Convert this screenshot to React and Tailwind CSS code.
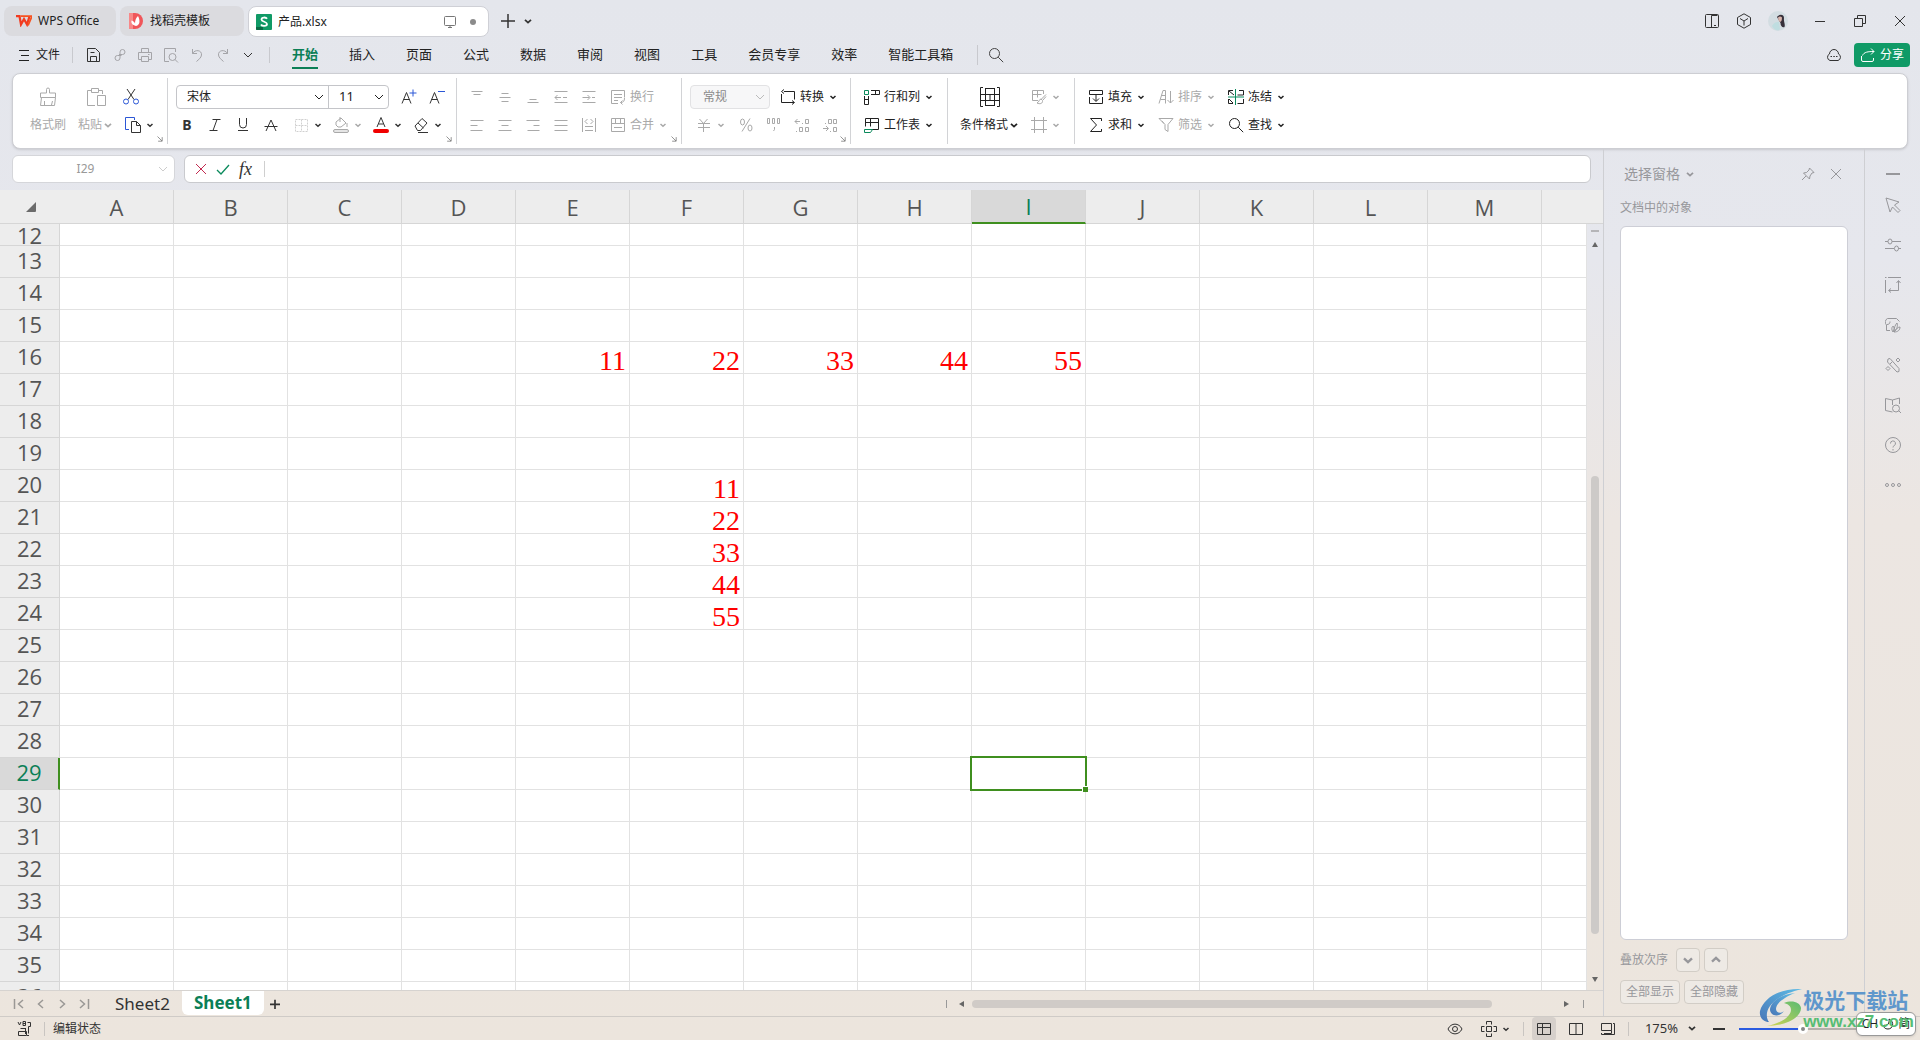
import React, { useState } from 'react'

const columns = ['A', 'B', 'C', 'D', 'E', 'F', 'G', 'H', 'I', 'J', 'K', 'L', 'M', '']
const rows = Array.from({ length: 25 }, (_, i) => i + 12)
const cells = {
  E16: '11', F16: '22', G16: '33', H16: '44', I16: '55',
  F20: '11', F21: '22', F22: '33', F23: '44', F24: '55',
}
const menus = ['开始', '插入', '页面', '公式', '数据', '审阅', '视图', '工具', '会员专享', '效率', '智能工具箱']

const icons = {
  menu: 'M3 3.5h10M5 8.5h8M3 13.5h10',
  save: 'M2.5 1.5h8l4 4v9h-12zM5.5 14v-4.500h6V14M5.5 5.500h4',
  link: 'M8 7.500h3.500a2.500 2.500 0 1 0-2.500-2.500v6a2.500 2.500 0 1 1-2.500-2.500h4',
  print: 'M4.500 5V1.500h7V5M4.500 12.500h-3v-7h13v7h-3M4.500 9.500h7v5h-7zM11 7.500h1.500',
  preview: 'M6 14.500H1.500v-13h11V5M9.500 6.500a3.500 3.500 0 1 0 0 7a3.500 3.500 0 1 0 0-7M12 12.500l3 3',
  undo: 'M3.500 2v4.500H8M3.500 6.500C6 2 13 3 12.500 8c-.3 3-3 4.500-5 6.500',
  redo: 'M12.500 2v4.500H8M12.500 6.500C10 2 3 3 3.500 8c.3 3 3 4.500 5 6.500',
  search: 'M6.500 1.500a5 5 0 1 0 0 10a5 5 0 1 0 0-10M10.200 10.200l5 5',
  alignTop: 'M2.500 2.500h11M4.500 5.500h7',
  alignMid: 'M4.500 4.500h7M2.500 8.500h11M4.500 12.500h7',
  alignBot: 'M4.500 10.500h7M2.500 13.500h11',
  outdent: 'M1.500 2.500h13M1.500 13.500h13M2 8.500h6M10 8.500h4M4.500 6L2 8.500L4.500 11',
  indent: 'M1.500 2.500h13M1.500 13.500h13M1.500 8.500h7M11 8.500h3M6.500 6L9 8.500L6.500 11',
  left: 'M1.500 3.500h13M1.500 8.500h7M1.500 13.500h12',
  center: 'M1.500 3.500h13M4.500 8.500h7M1.500 13.500h13',
  right: 'M1.500 3.500h13M8.500 8.500h6M2.500 13.500h12',
  justify: 'M1.500 3.500h13M1.500 8.500h13M1.500 13.500h13',
  distribute: 'M1.500 1v14M14.500 1v14M4 9.500h8M4 13.500h8M6.500 2L4 4.500L6.500 7M9.500 2L12 4.500L9.500 7',
  wrap: 'M8 14.500H1.500v-13h13v7M4 5.500h8M4 8.500h8M4 11.500h4M14.500 9c0 3-1 4.500-4 4.500M12.500 11.500l-2 2l2 2',
  merge: 'M1.500 1.500h13v13h-13zM1.500 6.500h13M5.500 1.500v5M10.500 1.500v5M4 10.500h8',
  convert: 'M4 2.500h10.500v8M1.500 5v8.500H14M4 .500l-2.500 2L4 4.500M12 11.500l2.500 2l-2.500 2',
  sheet: 'M8 12.500h6.500v-11h-13v8M1.500 5.500h13M6.500 1.500v8',
  fill: 'M1.500 5.500v-4h13v4zM1.500 8v6.500h13V8M8 5.500v6.500M5 9.500l3 3l3-3',
  sum: 'M13.500 4V1.500h-11l6 6.500l-6 6.500h11V12',
  sort: 'M1 14.500l4-13h2.500v13M3.500 6.500h4M2.500 10.500h5M12.500 2v12M9.500 11l3 3l3-3',
  filter: 'M1 1.500h14l-5 6v7l-3-2v-5zM4 4l2 2.500',
  cellStyle: 'M7 11.500H1.500v-10h11V5M1.500 5.500h9M6.500 1.500v7M15 5.500l-5 5M10 10c-2 0-1.500 3-4 4c3 1.500 6 .5 5.500-2.500zM12 11l3-3.500',
  frame: 'M3.500 0v16M12.500 0v16M0 3.500h16M0 12.500h16',
  eraser: 'M2 9l7-7.500L14 6l-6.500 7.500h-3zM5 6l5.500 5M5 15.500h10',
  split: 'M1.500 2.500h13v11h-13zM8 2.500v11',
  gridView: 'M1.500 2.500h13v11h-13zM6.500 2.500v11M1.500 6.500h13',
  pageView: 'M1.500 2.500h10v7h-10zM13 2.500h1.500v11h-13V12M4 12.500h7.500V9.500',
  eye: 'M1 8C4 1.500 12 1.500 15 8C12 14.500 4 14.500 1 8M8 5.500a2.500 2.500 0 1 0 0 5a2.500 2.500 0 1 0 0-5',
  focus: 'M5.500 5.500h5v5h-5zM5.500 3.500v-3h5v3M5.500 12.500v3h5v-3M3.500 5.500h-3v5h3M12.500 5.500h3v5h-3',
  vba: 'M2 1l1.500 3L5 1M7 .5v4h2.500v-4zM7 2.500h2M11.500 1.500h3v4h-2v7M4.500 7.500h5v3M9.500 7v6M2.500 10.500h8v4h-8zM11 14.500h2',
  phone: 'M1.500 2.500a1 1 0 0 1 1-1h11a1 1 0 0 1 1 1v11a1 1 0 0 1-1 1h-11a1 1 0 0 1-1-1zM7.500 14.500v-12h6M10 12.500h2',
  cube: 'M8 .8l6.500 3.700v7L8 15.200l-6.500-3.700v-7zM4 5.500l4 2.500l4-2.500M8 8v4.500',
  restore: 'M5.500 5.500v-3h8v8h-3M2.500 5.500h8v8h-8z',
  close: 'M3 3l10 10M13 3L3 13',
  minus: 'M3 8.500h10',
  cloud: 'M4 13.500a3.500 3.500 0 0 1-.5-6.500a4.500 4.500 0 0 1 9 0a3.500 3.500 0 0 1-.5 6.500zM4.500 9.500h1.500M7.300 9.500h1.500M10 9.500h1.500',
  share: 'M1.500 9v4a1.500 1.500 0 0 0 1.500 1.500h9a1.500 1.500 0 0 0 1.500-1.500v-2M2.500 8.500C4 5 8 4.500 14 4.500M11 1.500l3 3l-3 3',
  pin: 'M9.500 2l4.500 4.500l-2 .5l-2 3l-.5 3L3.500 7l3-.5l2.500-2.500zM6 10l-4 4',
  cursor: 'M1 1l13 4l-4.500 3l5.500 5.500l-2 2L7.500 10l-2.500 5z',
  sliders: 'M0 4.500h3M7 4.500h9M0 11.500h9M13 11.500h3M5 2a2 2.500 0 1 0 0 5a2 2.500 0 1 0 0-5M11.500 9a2 2.500 0 1 0 0 5a2 2.500 0 1 0 0-5',
  transform: 'M.5 3v13M3 .5h13M0 .5h1.500M13.500 4v9.500H4M11.500 6l2-2.500l2 2.500M6 11.500l-2.500 2l2.500 2',
  leaf: 'M5 13.500H1.500V8a4 4 0 0 1 1-6.500h9l3 3M2 7.500c2 0 3-1 3-3M8 15c-2-3-1-5 0-6c1 1 2 3 0 6zM9 15c0-4 1-7 3-9c1 3 0 6-3 9zM9 15c2-3 4-5 6-5c0 3-2 5-6 5z',
  tools: 'M3 2l2-.5l9 10v3l-2 .5L2.500 5zM5 7l2-2M13 1l2 2l-2 2l-2-2zM3 9.500l2 2l-2 2l-2-2z',
  book: 'M7.500 15l-7-1.500V1.500L7.500 3l7-2v6M7.500 3v5M11 8a3 3 0 1 0 0 7a3 3 0 1 0 0-7M13.500 13.500l2.500 2.500',
  help: 'M8 .5a7.500 7.500 0 1 0 0 15a7.500 7.500 0 1 0 0-15M5.500 6.500a2.500 2.500 0 1 1 3.500 2.200q-1 .5-1 1.800M8 12v1.500',
  more: 'M2 6.500a1.500 1.500 0 1 0 0 3a1.500 1.500 0 1 0 0-3M8 6.500a1.500 1.500 0 1 0 0 3a1.500 1.500 0 1 0 0-3M14 6.500a1.500 1.500 0 1 0 0 3a1.500 1.500 0 1 0 0-3',
  monitor: 'M2.500 3.500a1 1 0 0 1 1-1h9a1 1 0 0 1 1 1v7a1 1 0 0 1-1 1h-9a1 1 0 0 1-1-1zM6 13.500h4M8 11.500v2',
  launcher: 'M4 4l7 7M11.500 5v6.500H5',
}

const Icon = ({ name, className = 'size-4' }) => (
  <svg viewBox="0 0 16 16" fill="none" stroke="currentColor" className={`shrink-0 ${className}`}>
    <path d={icons[name]} />
  </svg>
)

const Chevron = ({ className = 'w-2.5' }) => (
  <svg viewBox="0 0 10 10" fill="none" stroke="currentColor" strokeWidth="1.5" className={`shrink-0 ${className}`}>
    <path d="M2.500 4L5 6.300L7.500 4" />
  </svg>
)

const ThinChevron = ({ className = 'w-2.5' }) => (
  <svg viewBox="0 0 10 10" fill="none" stroke="currentColor" className={`shrink-0 ${className}`}>
    <path d="M1 3l4 4l4-4" />
  </svg>
)

const Tool = ({ label, muted, children }) => (
  <button aria-label={label} className={`flex h-7 w-7 items-center justify-center ${muted ? 'text-[#a9a9a9]' : 'text-[#333]'}`}>
    {children}
  </button>
)

const DropTool = ({ label, muted, children }) => (
  <button aria-label={label} className={`flex h-7 w-10 items-center gap-1 pl-2 ${muted ? 'text-[#a9a9a9]' : 'text-[#333]'}`}>
    {children}
    <Chevron />
  </button>
)

const TextTool = ({ text, muted, arrow = true, children }) => (
  <button className={`flex h-7 items-center gap-1 whitespace-nowrap ${muted ? 'text-[#a9a9a9]' : 'text-[#222]'}`}>
    {children}
    {text}
    {arrow && <Chevron />}
  </button>
)

const Group = ({ width, launcher, children }) => (
  <div className={`relative flex h-[66px] shrink-0 border-r border-[#d2d3d6] pt-[5px] ${width}`}>
    {children}
    {launcher && (
      <button aria-label="更多设置" className="absolute right-0.5 bottom-0 text-[#555]">
        <Icon name="launcher" className="size-2.5" />
      </button>
    )}
  </div>
)

const TitleBar = () => (
  <header className="flex items-start pt-1.5 pl-1 text-xs text-[#222]">
    <nav className="flex gap-1">
      <a href="#home" className="flex h-[30px] w-28 items-center gap-1.5 rounded-lg bg-[#dbdbdf] pl-3">
        <svg viewBox="0 0 16 12" className="w-4" fill="none" stroke="#f23b20" strokeWidth="2.200">
          <path d="M0 1.200h3.500L5 9.500L8 4L11 9.500L13.500 1.200" />
          <path d="M4.500 1.200H16L12 10.500" stroke="#f7521f" strokeWidth="1.800" />
        </svg>
        WPS Office
      </a>
      <a href="#docer" className="flex h-[30px] w-31 items-center gap-1.5 rounded-lg bg-[#dbdbdf] pl-2">
        <svg viewBox="0 0 16 16" className="size-4">
          <path d="M1 0h6a8 8 0 0 1 0 16H1z" fill="#f0565a" />
          <path d="M1 0h4v16H1z" fill="#f88888" />
          <path d="M8 13c-4-1-5-3-4.500-5.500c2 .5 3 1.500 3.500 3c0-3 1-6 3-7.500c2 4 2.500 9-2 10z" fill="#fff" />
        </svg>
        找稻壳模板
      </a>
      <a href="#file" className="flex h-[31px] w-[241px] items-center gap-1.5 rounded-lg border border-[#cfd0d6] bg-white pr-2.5 pl-[7px]">
        <svg viewBox="0 0 16 16" className="size-4">
          <rect width="16" height="16" rx="1" fill="#109a66" />
          <path d="M0 13h7v3H1a1 1 0 0 1-1-1z" fill="#0a6b45" />
          <path d="M11 4.800C10 3 5.500 3 5.500 5.500S11 7.500 11 10S6 12.500 5 10.500" fill="none" stroke="#fff" strokeWidth="1.800" />
        </svg>
        <span className="grow">产品.xlsx</span>
        <Icon name="monitor" className="size-4 text-[#777]" />
        <span className="mr-0.5 ml-1.5 size-1.5 rounded-full bg-[#8b8b8b]" />
      </a>
    </nav>
    <button aria-label="新建" className="ml-3 flex h-[30px] items-center text-[#333]">
      <svg viewBox="0 0 14 14" className="size-3.5" stroke="currentColor" strokeWidth="1.500"><path d="M7 0v14M0 7h14" /></svg>
    </button>
    <button aria-label="标签列表" className="ml-[7px] flex h-[30px] items-center text-[#333]"><Chevron className="w-3" /></button>
    <div className="ml-auto flex h-[29px] items-center pr-3 text-[#333]">
      <button aria-label="手机视图" className="mr-4"><Icon name="phone" /></button>
      <button aria-label="应用" className="mr-4"><Icon name="cube" /></button>
      <button aria-label="账号" className="mr-6">
        <svg viewBox="0 0 20 20" className="size-5">
          <circle cx="10" cy="10" r="10" fill="#d3dde2" />
          <path d="M4 15c2-4 5-4 7-4l1 7.500c-3 1.500-6 .5-8-3.500z" fill="#bfdde0" />
          <path d="M9 6c2-3 7-3 7 1c-.5 4 1.500 6 .5 9c-2 1-4-1-4-4z" fill="#37303a" />
          <path d="M10 6.500q2-2 4 0q0 4-2 4.500q-2-1-2-4.500" fill="#d9b5ac" />
        </svg>
      </button>
      <button aria-label="最小化" className="mr-6"><Icon name="minus" /></button>
      <button aria-label="还原" className="mr-6"><Icon name="restore" /></button>
      <button aria-label="关闭"><Icon name="close" /></button>
    </div>
  </header>
)

const MenuBar = () => (
  <div className="flex h-[37px] items-center pr-2.5 pl-4 text-[13px] text-[#222]">
    <button className="flex items-center gap-1 text-xs"><Icon name="menu" />文件</button>
    <span className="ml-3 h-4 w-px bg-[#c8c9ce]" />
    <div className="ml-3 flex items-center gap-2.5 text-[#a4a4a8]">
      <button aria-label="保存" className="text-[#333]"><Icon name="save" /></button>
      <button aria-label="输出"><Icon name="link" /></button>
      <button aria-label="打印"><Icon name="print" /></button>
      <button aria-label="预览"><Icon name="preview" /></button>
      <button aria-label="撤销"><Icon name="undo" /></button>
      <button aria-label="恢复"><Icon name="redo" /></button>
      <button aria-label="更多" className="ml-0.5 text-[#333]"><ThinChevron /></button>
    </div>
    <span className="ml-4 h-4 w-px bg-[#c8c9ce]" />
    <nav className="ml-[22px] flex gap-[31px] pt-1">
      {menus.map((m, i) => (
        <a
          key={m}
          href={`#${m}`}
          className={i === 0 ? 'border-b-2 border-[#0b7f56] pb-0.5 font-bold text-[#0b7f56]' : 'border-b-2 border-transparent pb-0.5'}
        >
          {m}
        </a>
      ))}
    </nav>
    <span className="ml-6 h-5 w-px bg-[#c8c9ce]" />
    <button aria-label="查找命令" className="ml-2.5 text-[#444]"><Icon name="search" /></button>
    <button aria-label="云文档" className="mr-3 ml-auto text-[#333]"><Icon name="cloud" /></button>
    <button className="flex h-6 w-14 items-center justify-center gap-1 rounded bg-[#109a66] text-xs text-white">
      <Icon name="share" />分享
    </button>
  </div>
)

const Ribbon = () => (
  <section className="mx-3 flex rounded-lg border border-[#cdced3] bg-white py-1 text-xs shadow">
    <Group width="w-[155px] pl-[17px]" launcher>
      <button className="flex w-9 flex-col items-center text-[#a9a9a9]">
        <span className="flex h-7 items-center">
          <svg viewBox="0 0 20 20" className="size-5" fill="none" stroke="currentColor">
            <path d="M8.500 6V2.500a1.500 1.500 0 0 1 3 0V6h6v4.500h-15V6zM3.500 10.500l-1 8h14l1-8M6.500 18v-4M13.500 18l1-4" />
          </svg>
        </span>
        <span className="flex h-7 items-center whitespace-nowrap">格式刷</span>
      </button>
      <button className="ml-3 flex w-9 flex-col items-center text-[#a9a9a9]">
        <span className="flex h-7 items-center">
          <svg viewBox="0 0 20 20" className="size-5" fill="none" stroke="currentColor">
            <path d="M9 18.500H1.500v-15H5M13 3.500h3.500V7M5.500 1.500h7v4h-7zM11.500 8.500h8v10h-8z" />
          </svg>
        </span>
        <span className="flex h-7 items-center whitespace-nowrap">粘贴<Chevron className="w-3" /></span>
      </button>
      <div className="ml-[3px] flex flex-col">
        <Tool label="剪切">
          <svg viewBox="0 0 16 16" className="size-4" fill="none" stroke="currentColor">
            <path d="M4 0l7 10.500M12 0L5 10.500" />
            <circle cx="3" cy="12.500" r="2.500" stroke="#2b57d6" />
            <circle cx="13" cy="12.500" r="2.500" stroke="#2b57d6" />
          </svg>
        </Tool>
        <DropTool label="复制">
          <svg viewBox="0 0 16 16" className="size-4" fill="none" stroke="currentColor">
            <path d="M4 12.500H.5v-12h9V3" stroke="#2b57d6" />
            <path d="M6.500 4.500h5l4 4v7h-9zM11.500 4.500v4h4" />
          </svg>
        </DropTool>
      </div>
    </Group>

    <Group width="w-[289px] flex-col" launcher>
      <div className="flex h-7 items-center pl-2">
        <div className="flex h-6 items-center rounded border border-[#c4c5c9] text-[#222]">
          <label className="flex w-[151px] items-center pr-1">
            <select aria-label="字体" className="grow appearance-none pl-2.5"><option>宋体</option></select>
            <ThinChevron />
          </label>
          <label className="flex h-full w-[60px] items-center border-l border-[#c4c5c9] pr-1">
            <select aria-label="字号" className="w-10 grow appearance-none pl-2.5 text-[13px]"><option>11</option></select>
            <ThinChevron />
          </label>
        </div>
        <div className="ml-1.5 flex">
          <Tool label="增大字号">
            <svg viewBox="0 0 16 16" className="size-4" fill="none" stroke="currentColor">
              <path d="M1 14.500L5.500 3.500L10 14.500M2.500 10.500h6" /><path d="M12 .5v7M8.500 4h7" stroke="#2b57d6" />
            </svg>
          </Tool>
          <Tool label="减小字号">
            <svg viewBox="0 0 16 16" className="size-4" fill="none" stroke="currentColor">
              <path d="M1 14.500L5.500 3.500L10 14.500M2.500 10.500h6" /><path d="M9 2.500h7" stroke="#2b57d6" />
            </svg>
          </Tool>
        </div>
      </div>
      <div className="flex h-7 items-center pl-[5px]">
        <Tool label="加粗"><b className="text-sm">B</b></Tool>
        <Tool label="倾斜">
          <svg viewBox="0 0 16 16" className="size-4" fill="none" stroke="currentColor"><path d="M5.500 2.500h8M2.500 13.500h8M10 2.500L6 13.500" /></svg>
        </Tool>
        <Tool label="下划线">
          <svg viewBox="0 0 16 16" className="size-4" fill="none" stroke="currentColor"><path d="M4.500 1v6.500a3.500 3.500 0 0 0 7 0V1M3 13.500h10" /></svg>
        </Tool>
        <Tool label="删除线">
          <svg viewBox="0 0 16 16" className="size-4" fill="none" stroke="currentColor"><path d="M3 14L8 3L13 14M1.500 9.500h13" /></svg>
        </Tool>
        <DropTool label="边框">
          <svg viewBox="0 0 16 16" className="size-4 text-[#d0d0d0]" fill="none" stroke="currentColor" strokeDasharray="2 1"><path d="M2.500 2.500h12v12h-12zM8.500 2.500v12M2.500 8.500h12" /></svg>
        </DropTool>
        <DropTool label="填充颜色" muted>
          <svg viewBox="0 0 16 16" className="size-4" fill="none" stroke="currentColor">
            <path d="M3 5l5-4l5 5l-5 4H5L3 8zM7 5V0M14 6v4" /><rect x=".5" y="12.500" width="15" height="3" rx="1.500" fill="#e5e5e5" />
          </svg>
        </DropTool>
        <DropTool label="字体颜色">
          <svg viewBox="0 0 16 16" className="size-4" fill="none" stroke="currentColor">
            <path d="M4 10L8 .5L12 10M5.500 7h5" /><rect x="0" y="12" width="16" height="4" rx="2" fill="#f00000" stroke="none" />
          </svg>
        </DropTool>
        <DropTool label="清除"><Icon name="eraser" /></DropTool>
      </div>
    </Group>

    <Group width="w-[225px] flex-col" launcher>
      <div className="flex h-7 pl-1.5">
        {['alignTop', 'alignMid', 'alignBot', 'outdent', 'indent'].map((n) => (
          <Tool key={n} label={n} muted><Icon name={n} /></Tool>
        ))}
        <span className="w-[7px]" />
        <TextTool text="换行" muted arrow={false}><Icon name="wrap" /></TextTool>
      </div>
      <div className="flex h-7 pl-1.5">
        {['left', 'center', 'right', 'justify', 'distribute'].map((n) => (
          <Tool key={n} label={n} muted><Icon name={n} /></Tool>
        ))}
        <span className="w-[7px]" />
        <TextTool text="合并" muted><Icon name="merge" /></TextTool>
      </div>
    </Group>

    <Group width="w-[169px] flex-col" launcher>
      <div className="flex h-7 items-center pl-2">
        <label className="mr-2.5 flex h-6 w-20 items-center rounded border border-[#e2e2e4] bg-[#f7f7f8] pr-1 text-[#8a8a8a]">
          <select aria-label="数字格式" className="w-10 grow appearance-none pl-3"><option>常规</option></select>
          <ThinChevron className="w-2.5 text-[#bbb]" />
        </label>
        <TextTool text="转换"><Icon name="convert" /></TextTool>
      </div>
      <div className="flex h-7 pl-1.5">
        <DropTool label="货币" muted>
          <svg viewBox="0 0 16 16" className="size-4" fill="none" stroke="currentColor"><path d="M3.500 2l4 4.500l4-4.500M2 6.500h12M2 10.500h12M7.500 6.500V15" /></svg>
        </DropTool>
        <span className="w-1" />
        <Tool label="百分比" muted>
          <svg viewBox="0 0 16 16" className="size-4" fill="none" stroke="currentColor"><path d="M12 1.500l-8 13" /><ellipse cx="4.500" cy="5" rx="2" ry="3" /><ellipse cx="12" cy="11" rx="2" ry="3" /></svg>
        </Tool>
        <Tool label="千位分隔" muted>
          <svg viewBox="0 0 16 16" className="size-4" fill="none" stroke="currentColor"><path d="M1.500 1.500h2v5h-2zM6.500 1.500h2v5h-2zM11.500 1.500h2v5h-2zM8.500 10v2.500l-1 1.500" /></svg>
        </Tool>
        <Tool label="增加小数位" muted>
          <svg viewBox="0 0 16 16" className="size-4" fill="none" stroke="currentColor"><path d="M3.500 2L1 4.500L3.500 7M1 4.500h5M8 6.500h1M11.500 2.500h3v4h-3zM2 14.500h1M5.500 10.500h3v4h-3zM11.500 10.500h3v4h-3z" /></svg>
        </Tool>
        <Tool label="减少小数位" muted>
          <svg viewBox="0 0 16 16" className="size-4" fill="none" stroke="currentColor"><path d="M4 9L6.500 11.500L4 14M1 11.500h5M8 14.500h1M11.500 10.500h3v4h-3zM3 6.500h1M6.500 2.500h3v4h-3zM11.500 2.500h3v4h-3z" /></svg>
        </Tool>
      </div>
    </Group>

    <Group width="w-[97px] flex-col pl-[13px]">
      <TextTool text="行和列">
        <svg viewBox="0 0 16 16" className="size-4" fill="none" stroke="currentColor">
          <path d="M7 1.500h8.500v4H7M11.500 1.500v4M.5 7v8.500h4V7M.5 10.500h4" /><path d="M.5 1.500h4v4h-4z" stroke="#0b8a5c" />
        </svg>
      </TextTool>
      <TextTool text="工作表">
        <svg viewBox="0 0 16 16" className="size-4" fill="none" stroke="currentColor">
          <path d={icons.sheet} /><path d="M.5 12.500h8l-2 3h-6z" stroke="#0b8a5c" />
        </svg>
      </TextTool>
    </Group>

    <Group width="w-[127px] pl-3">
      <button className="flex flex-col items-center text-[#222]">
        <span className="flex h-7 items-center">
          <svg viewBox="0 0 20 20" className="size-5" fill="none" stroke="currentColor">
            <path d="M3 .5H.5v19H3M17 .5h2.500v19H17M5.500 1.500v17M14.500 1.500v17M.5 7.500h19M.5 13.500h19M5 1.500h10M5 18.500h10M10 7.500v6" />
          </svg>
        </span>
        <span className="flex h-7 items-center whitespace-nowrap">条件格式<Chevron className="w-3" /></span>
      </button>
      <div className="ml-[3px] flex flex-col">
        <DropTool label="单元格样式" muted><Icon name="cellStyle" /></DropTool>
        <DropTool label="表格样式" muted><Icon name="frame" /></DropTool>
      </div>
    </Group>

    <div className="grid grid-cols-[70px_70px_70px] content-start pt-[5px] pl-[13px]">
      <TextTool text="填充"><Icon name="fill" /></TextTool>
      <TextTool text="排序" muted><Icon name="sort" /></TextTool>
      <TextTool text="冻结">
        <svg viewBox="0 0 16 16" className="size-4" fill="none" stroke="currentColor">
          <path d="M5 1.500H.5V6M11 1.500h4.500V6h-6M.5 10v4.500H5M15.500 10v4.500h-6M1 2l5 4M1 10l4 4" /><path d="M0 8h16M7.500 0v16" stroke="#0b8a5c" />
        </svg>
      </TextTool>
      <TextTool text="求和"><Icon name="sum" /></TextTool>
      <TextTool text="筛选" muted><Icon name="filter" /></TextTool>
      <TextTool text="查找"><Icon name="search" /></TextTool>
    </div>
  </section>
)

const FormulaBar = () => {
  const [formula, setFormula] = useState('')
  return (
    <div className="flex gap-[9px] px-3 pt-1.5 pb-[7px] text-xs">
      <div className="flex h-7 w-[163px] items-center rounded-md border border-[#d5d6da] bg-white pr-1.5 text-[#999]">
        <input aria-label="名称框" defaultValue="I29" className="w-10 grow text-center outline-none" />
        <ThinChevron className="w-2.5 text-[#ccc]" />
      </div>
      <div className="flex h-7 grow items-center rounded-md border border-[#c9cace] bg-white pl-2">
        <button aria-label="取消" className="text-[#c22a4f]"><Icon name="close" /></button>
        <button aria-label="输入" className="ml-1.5 text-[#0b8a5c]">
          <svg viewBox="0 0 16 16" className="size-4" fill="none" stroke="currentColor" strokeWidth="1.300"><path d="M2 9l4 4l8-9" /></svg>
        </button>
        <button aria-label="插入函数" className="ml-2 font-['Liberation_Serif',serif] text-lg leading-none text-[#333] italic">fx</button>
        <span className="ml-3 h-4 w-px bg-[#cfcfcf]" />
        <input
          aria-label="编辑栏"
          value={formula}
          onChange={(e) => setFormula(e.target.value)}
          className="grow px-2 outline-none"
        />
      </div>
    </div>
  )
}

const Grid = () => (
  <div className="flex min-h-0 grow">
    <div className="min-w-0 grow overflow-hidden bg-white">
      <table className="w-[1656px] table-fixed border-separate border-spacing-0 font-['Open_Sans',sans-serif] text-[22px] leading-5 text-[#555]">
        <thead>
          <tr className="h-[34px] bg-[#ededed]">
            <th className="w-[60px] border-b border-[#d6d6d6]">
              <svg viewBox="0 0 10 10" className="ml-[26px] size-2.5" fill="#6b6b6b"><path d="M10 0v9a1 1 0 0 1-1 1H0z" /></svg>
            </th>
            {columns.map((c) => (
              <th
                key={c}
                className={
                  c === 'I'
                    ? 'w-[114px] border-r border-b-2 border-r-[#d6d6d6] border-b-[#3f8f1f] bg-[#d9d9d9] font-normal text-[#0b7f56]'
                    : 'w-[114px] border-r border-b border-[#d6d6d6] font-normal'
                }
              >
                {c}
              </th>
            ))}
          </tr>
        </thead>
        <tbody>
          {rows.map((r) => (
            <tr key={r} className={r === 12 ? 'h-[22px]' : 'h-8'}>
              <th
                className={
                  r === 29
                    ? 'border-r-2 border-b border-r-[#3f8f1f] border-b-[#d6d6d6] bg-[#d9d9d9] p-0 pb-1 font-normal text-[#0b7f56]'
                    : r === 12
                      ? 'border-r border-b border-[#d6d6d6] bg-[#ededed] p-0 leading-4 font-normal'
                      : 'border-r border-b border-[#d6d6d6] bg-[#ededed] p-0 pb-1 font-normal'
                }
              >
                {r}
              </th>
              {columns.map((c) => (
                <td
                  key={c}
                  className={
                    r === 12
                      ? 'border-r border-b border-[#e2e2e2] p-0'
                      : "relative border-r border-b border-[#e2e2e2] p-0 pt-1.5 pr-[3px] text-right font-['Liberation_Serif',serif] text-[28px] text-[#f00]"
                  }
                >
                  {cells[c + r]}
                  {c === 'I' && r === 29 && (
                    <span className="absolute -inset-0.5 z-10 border-2 border-[#3f8f1f]">
                      <span className="absolute -right-[3px] -bottom-[3px] size-1.5 border-t border-l border-white bg-[#3f8f1f]" />
                    </span>
                  )}
                </td>
              ))}
            </tr>
          ))}
        </tbody>
      </table>
    </div>
    <div className="flex w-[17px] shrink-0 flex-col items-center border-l border-[#e2e2e2] text-[#666]">
      <span className="-ml-px h-[34px] w-[17px] shrink-0 border-b border-[#d6d6d6] bg-[#ededed]" />
      <span className="mt-1.5 h-0.5 w-2 bg-[#b5b5b8]" />
      <svg viewBox="0 0 6 5" className="mt-2.5 w-1.5" fill="currentColor"><path d="M0 5L3 0l3 5z" /></svg>
      <span className="grow-[230]" />
      <span className="w-2 grow-[459] rounded-full bg-[#cdcac8]" />
      <span className="grow-[43]" />
      <svg viewBox="0 0 6 5" className="mb-2 w-1.5" fill="currentColor"><path d="M0 0h6L3 5z" /></svg>
    </div>
  </div>
)

const SheetTabs = () => (
  <div className="flex h-[26px] shrink-0 items-center border-t border-[#d6d3d0] font-['Noto_Sans',sans-serif] text-[17px] text-[#333]">
    <div className="flex gap-[5px] pl-3 text-[#9a9895]">
      {['M2.500 3v10M11 4L6.500 8l4.500 4', 'M10 4L5.500 8L10 12', 'M6 4l4.500 4L6 12', 'M5 4l4.500 4L5 12M13.500 3v10'].map((d) => (
        <button key={d} aria-label="切换工作表">
          <svg viewBox="0 0 16 16" className="size-4" fill="none" stroke="currentColor" strokeWidth="1.500"><path d={d} /></svg>
        </button>
      ))}
    </div>
    <button className="ml-6 leading-5">Sheet2</button>
    <button className="ml-3 h-6 w-[82px] self-start rounded-b-md bg-white leading-5 font-bold text-[#0b7f56]">Sheet1</button>
    <button aria-label="新建工作表" className="ml-1.5">
      <svg viewBox="0 0 12 12" className="size-2.5" stroke="currentColor" strokeWidth="2"><path d="M6 1v11M0 6.500h12" /></svg>
    </button>
    <div className="ml-auto flex w-[41%] items-center pr-[19px] text-[#666]">
      <span className="h-2 w-px bg-[#999]" />
      <svg viewBox="0 0 5 6" className="ml-3 w-[5px]" fill="currentColor"><path d="M5 0v6L0 3z" /></svg>
      <span className="ml-2 h-2 grow-[518] rounded-full bg-[#d0cbc7]" />
      <span className="grow-[72]" />
      <svg viewBox="0 0 5 6" className="w-[5px]" fill="currentColor"><path d="M0 0v6l5-3z" /></svg>
      <span className="ml-3.5 h-2 w-px bg-[#999]" />
    </div>
  </div>
)

const SelectionPane = () => (
  <aside className="flex w-[262px] shrink-0 flex-col border-x border-[#cecfd3] px-4 pt-[15px] pb-3 text-xs text-[#97979b]">
    <div className="flex h-5 items-center">
      <button className="flex items-center gap-1 pl-1 text-sm">选择窗格<Chevron className="w-3" /></button>
      <button aria-label="固定" className="ml-auto"><Icon name="pin" /></button>
      <button aria-label="关闭窗格" className="mr-1 ml-3"><Icon name="close" /></button>
    </div>
    <h2 className="mt-3.5 leading-5">文档中的对象</h2>
    <div className="mt-2 grow rounded-md border border-[#cdced6] bg-white" />
    <div className="mt-2 flex items-center gap-1">
      <span className="mr-1">叠放次序</span>
      <button aria-label="下移" className="flex h-6 w-6 items-center justify-center rounded border border-[#d2cdc6] bg-[#eeeae5]">
        <Chevron className="w-4" />
      </button>
      <button aria-label="上移" className="flex h-6 w-6 items-center justify-center rounded border border-[#d2cdc6] bg-[#eeeae5]">
        <Chevron className="w-4 rotate-180" />
      </button>
    </div>
    <div className="mt-2 flex gap-1">
      <button className="h-6 rounded border border-[#d2cdc6] bg-[#eeeae5] px-[5px]">全部显示</button>
      <button className="h-6 rounded border border-[#d2cdc6] bg-[#eeeae5] px-[5px]">全部隐藏</button>
    </div>
  </aside>
)

const SideBar = () => (
  <nav className="flex w-[55px] shrink-0 flex-col items-center gap-6 pt-6 text-[#97979b]">
    <span className="h-0.5 w-3.5 bg-[#97979b]" />
    {['cursor', 'sliders', 'transform', 'leaf', 'tools', 'book', 'help', 'more'].map((n) => (
      <button key={n} aria-label={n} className="first-of-type:-mt-0.5"><Icon name={n} /></button>
    ))}
  </nav>
)

const StatusBar = () => {
  const [zoom, setZoom] = useState(50)
  return (
    <footer className="flex h-6 shrink-0 items-center border-t border-[#cfcbc7] text-xs text-[#333]">
      <button aria-label="宏" className="ml-4"><Icon name="vba" /></button>
      <span className="ml-3 h-3.5 w-px bg-[#c9c5c1]" />
      <span className="ml-2">编辑状态</span>
      <button aria-label="护眼模式" className="ml-auto"><Icon name="eye" /></button>
      <button aria-label="阅读模式" className="ml-[18px] flex items-center gap-1"><Icon name="focus" /><Chevron /></button>
      <span className="ml-3 h-3.5 w-px bg-[#c9c5c1]" />
      <button aria-label="普通视图" className="ml-2 flex h-6 w-6 items-center justify-center rounded bg-[#d6d0cb]"><Icon name="gridView" /></button>
      <button aria-label="分页预览" className="ml-3"><Icon name="split" /></button>
      <button aria-label="页面布局" className="ml-4"><Icon name="pageView" /></button>
      <span className="ml-3 h-3.5 w-px bg-[#c9c5c1]" />
      <button className="ml-4 flex items-center gap-2 text-[13px]">175%<Chevron className="w-3" /></button>
      <button aria-label="缩小" className="ml-[15px] h-0.5 w-3 bg-[#333]" />
      <input
        type="range"
        aria-label="显示比例"
        value={zoom}
        onChange={(e) => setZoom(e.target.value)}
        className="mr-[53px] ml-3.5 h-0.5 w-32 appearance-none bg-[linear-gradient(to_right,#2b5be0_50%,#b5b0ab_50%)] [&::-webkit-slider-thumb]:size-2.5 [&::-webkit-slider-thumb]:appearance-none [&::-webkit-slider-thumb]:rounded-full [&::-webkit-slider-thumb]:border-[3px] [&::-webkit-slider-thumb]:border-white [&::-webkit-slider-thumb]:bg-[#888]"
      />
    </footer>
  )
}

const Watermark = () => (
  <div className="pointer-events-none absolute right-1.5 bottom-2 z-20 flex">
    <svg viewBox="0 0 44 40" className="h-10 w-11">
      <defs>
        <linearGradient id="wave" x1="0" y1="1" x2="1" y2="0">
          <stop offset="0" stopColor="#4a78b8" />
          <stop offset="1" stopColor="#5cbbe6" />
        </linearGradient>
        <linearGradient id="leafy" x1="0" y1="1" x2="1" y2="0">
          <stop offset="0" stopColor="#d5d552" />
          <stop offset="1" stopColor="#5bbb72" />
        </linearGradient>
      </defs>
      <path d="M43 1C22 0 5 9 1 23c-1 6 3 11 9 11C4 26 9 9 43 1z" fill="url(#wave)" />
      <path d="M36 5C22 6 11 14 11 22c1 7 10 7 14 1c-3 3-8 2-8-2c0-6 9-12 19-16z" fill="url(#wave)" />
      <path d="M25 15c8-3 16-1 17 5c0 10-16 18-34 18c12-2 24-9 24-16c0-4-3-6-7-7z" fill="url(#leafy)" />
    </svg>
    <div className="flex flex-col font-bold">
      <span className="text-[21px] leading-6 text-[#5f97cc]">极光下载站</span>
      <span className="font-['Liberation_Sans',sans-serif] text-[17px] leading-5 text-[#57bd74]">www.xz7.com</span>
    </div>
  </div>
)

const App = () => (
  <div className="relative flex h-screen flex-col overflow-hidden bg-[linear-gradient(180deg,#e4e6ec_0%,#e6e7ed_25%,#ece6e2_50%,#ece5dd_100%)] font-['Noto_Sans','Noto_Sans_CJK_SC',sans-serif]">
    <TitleBar />
    <MenuBar />
    <Ribbon />
    <main className="flex min-h-0 grow">
      <div className="flex min-w-0 grow flex-col">
        <FormulaBar />
        <Grid />
        <SheetTabs />
      </div>
      <SelectionPane />
      <SideBar />
    </main>
    <StatusBar />
    <div className="absolute right-1 bottom-1 z-10 flex h-6 w-15 items-center justify-center gap-1 rounded-md border border-[#999] bg-white text-xs text-[#222] shadow">
      CH
      <svg viewBox="0 0 12 12" className="size-3" fill="none" stroke="currentColor"><path d="M7 1c6 3 4 10-1 10c-3 0-5-2-4-4c2 2 6-1 5-6z" /></svg>
      简
    </div>
    <Watermark />
  </div>
)

export default App
